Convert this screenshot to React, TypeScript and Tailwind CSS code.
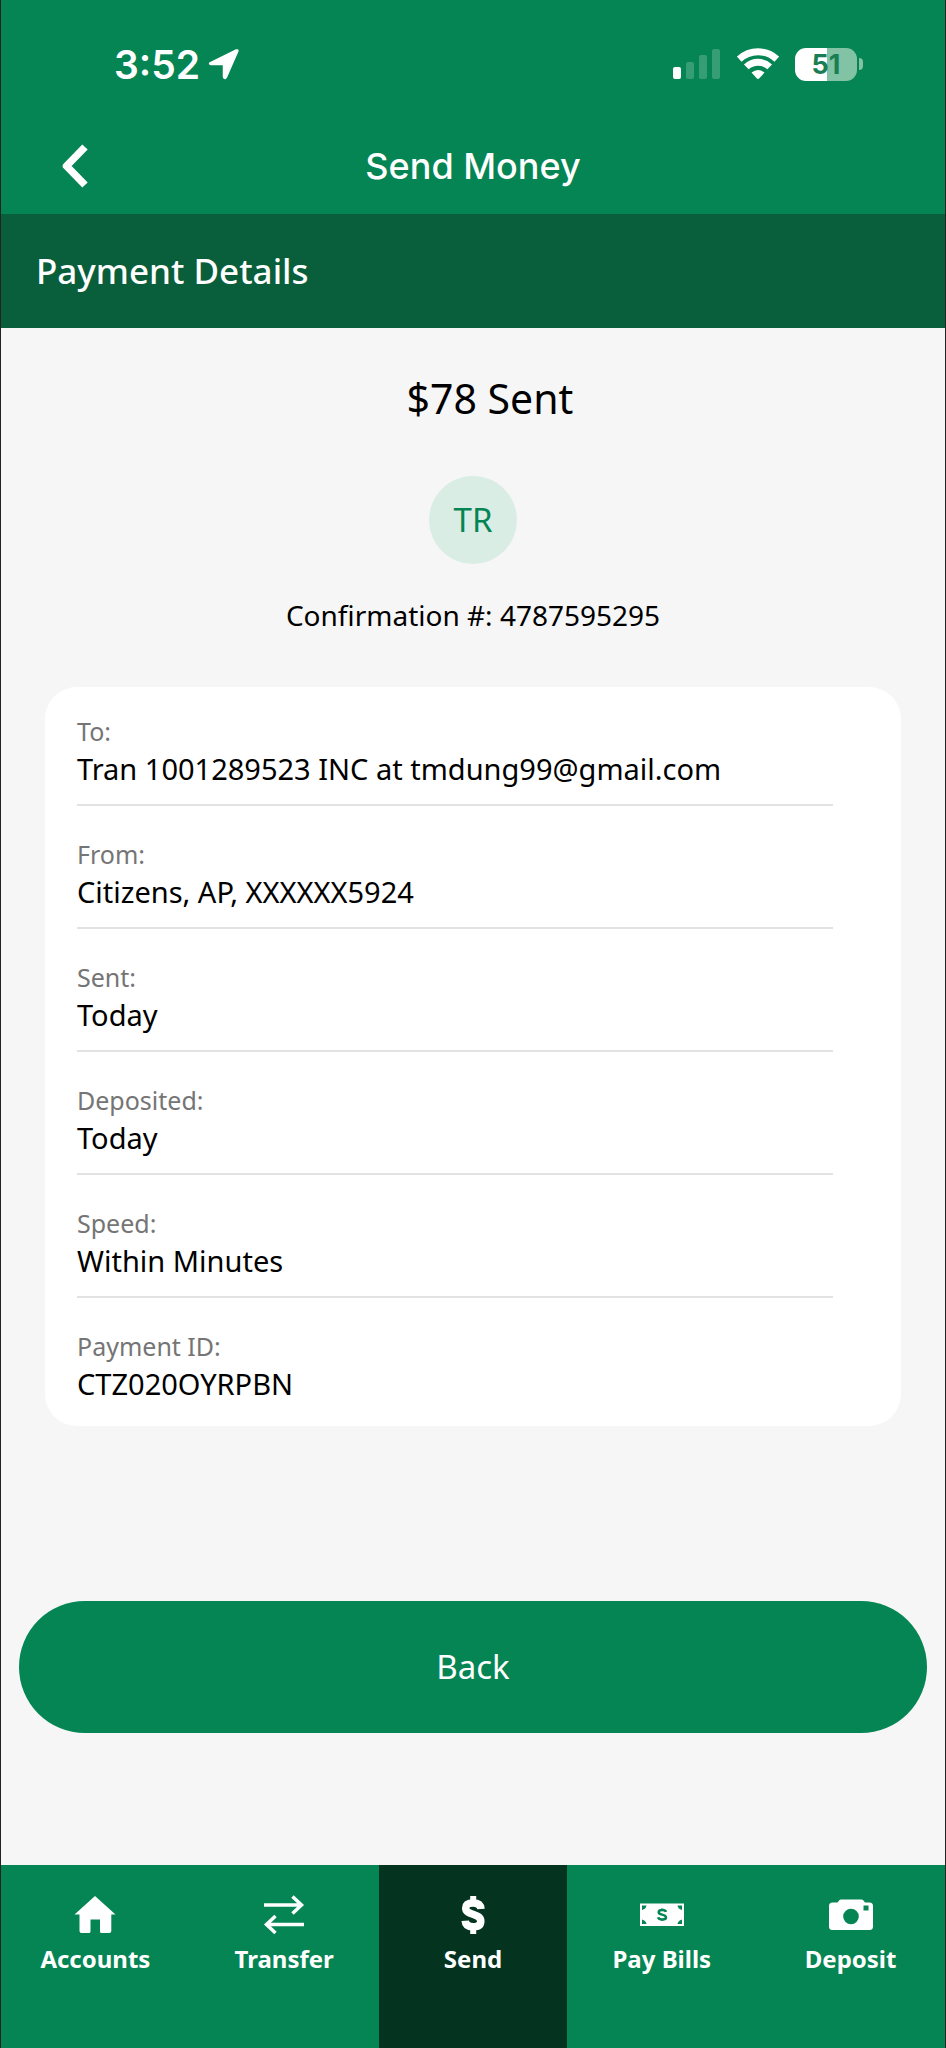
import React from "react";

const details = [
  { label: "To:", value: "Tran 1001289523 INC at tmdung99@gmail.com" },
  { label: "From:", value: "Citizens, AP, XXXXXX5924" },
  { label: "Sent:", value: "Today" },
  { label: "Deposited:", value: "Today" },
  { label: "Speed:", value: "Within Minutes" },
  { label: "Payment ID:", value: "CTZ020OYRPBN" },
];

function LocationArrow() {
  return (
    <svg className="h-8 w-8" viewBox="0 0 32 32" fill="white" aria-hidden="true">
      <path
        d="M2 14.800 28.300 2Q30.300 1.500 29.800 3.300L18.500 29Q17.500 31 16.200 30.200 15.500 29.800 15.500 28.500V17.500Q15.500 16.500 14.500 16.500H3Q1.600 16.400 1.600 15.700 1.600 15.200 2 14.800Z"
        stroke="white"
        strokeWidth="1.500"
        strokeLinejoin="round"
      />
    </svg>
  );
}

function Signal() {
  return (
    <svg className="h-8 w-12" viewBox="0 0 48 32" fill="white" aria-hidden="true">
      <rect x="0" y="19" width="8" height="12" rx="2" />
      <rect x="13" y="14" width="8" height="17" rx="2" opacity="0.2" />
      <rect x="26" y="7" width="8" height="24" rx="2" opacity="0.2" />
      <rect x="39" y="1" width="8" height="30" rx="2" opacity="0.2" />
    </svg>
  );
}

function Wifi() {
  return (
    <svg className="h-8 w-[42px]" viewBox="0 0 42 32" aria-hidden="true">
      <g fill="none" stroke="white" strokeWidth="6.800">
        <path d="M2.200 11.200A27.500 27.500 0 0 1 39.800 11.200" />
        <path d="M9.300 18.900A17 17 0 0 1 32.700 18.900" />
      </g>
      <path d="M14.500 24.600Q21 19.200 27.500 24.600L22.300 30.300Q21 31.600 19.700 30.300Z" fill="white" />
    </svg>
  );
}

function Battery() {
  return (
    <div className="flex items-center gap-[2px]">
      <div className="flex h-[33px] w-[62px] items-center justify-center rounded-[11px] bg-[linear-gradient(90deg,#ffffff_51%,#81c3a4_51%)] text-[27px] leading-none font-bold text-[#1a7d53]">
        51
      </div>
      <div className="h-3 w-1 rounded-r-full bg-[#81c3a4]" />
    </div>
  );
}

function HomeIcon() {
  return (
    <svg className="h-10 w-11" viewBox="0 0 44 40" fill="white" aria-hidden="true">
      <path d="M22 1 42.500 19.500H38.300V36Q38.300 38 36.300 38H28.500Q27 38 27 36.500V24.500H17.500V36.500Q17.500 38 16 38H8.500Q6.500 38 6.500 36V19.500H1.500Z" />
    </svg>
  );
}

function TransferIcon() {
  return (
    <svg className="h-10 w-11" viewBox="0 0 44 40" fill="none" stroke="white" strokeWidth="3.500" aria-hidden="true">
      <path d="M2 10H40M30.500 1.500 39.500 10 30.500 18.500M42 29.500H4M13.500 21 4.500 29.500 13.500 38" />
    </svg>
  );
}

function DollarIcon() {
  return (
    <svg className="h-10 w-11" viewBox="0 0 44 40" fill="none" stroke="white" aria-hidden="true">
      <path d="M30 14Q29.500 8 22.200 8 14.700 8 14.700 13.200C14.700 20.500 29.800 18 29.800 26.300Q29.800 31.800 22.200 31.800 14.500 31.800 14.200 25.800" strokeWidth="7.500" />
      <path d="M22.200 1V8M22.200 32V39" strokeWidth="6" />
    </svg>
  );
}

function BillIcon() {
  return (
    <svg className="h-10 w-11" viewBox="0 0 44 40" aria-hidden="true">
      <path d="M0 8.500H44V31H0Z" fill="white" />
      <path d="M2 10.500H6.500Q6 14 2 15ZM42 10.500H37.500Q38 14 42 15ZM2 29H6.500Q6 25.500 2 24.500ZM42 29H37.500Q38 25.500 42 24.500Z" fill="#048553" />
      <path d="M26 16.800Q25.500 15 22.200 15 18.700 15 18.700 17.200C18.700 20.500 26 18.700 26 22.500Q26 24.500 22.300 24.500 18.700 24.500 18.200 22.300M22.200 13.500V15M22.200 24.500V26" fill="none" stroke="#048553" strokeWidth="2.500" />
    </svg>
  );
}

function CameraIcon() {
  return (
    <svg className="h-10 w-11" viewBox="0 0 44 40" aria-hidden="true">
      <path d="M3.500 7.500H8.500L10.500 5Q11 4.500 12 4.500H32.500Q33.500 4.500 34 5L36 7.500H40.500Q44 7.500 44 11V31.500Q44 35 40.500 35H3.500Q0 35 0 31.500V11Q0 7.500 3.500 7.500Z" fill="white" />
      <circle cx="22" cy="21.500" r="7.800" fill="#048553" />
      <rect x="34.500" y="10.500" width="5" height="5" fill="#048553" />
    </svg>
  );
}

const tabs = [
  { label: "Accounts", Icon: HomeIcon },
  { label: "Transfer", Icon: TransferIcon },
  { label: "Send", Icon: DollarIcon, active: true },
  { label: "Pay Bills", Icon: BillIcon },
  { label: "Deposit", Icon: CameraIcon },
];

export default function App() {
  return (
    <div className="flex min-h-screen flex-col border-x border-[#232323] bg-[#f6f6f6] font-['Noto_Sans',sans-serif] text-black">
      <header className="bg-[#048553] font-['Inter',sans-serif] text-white">
        <div className="flex h-32 items-center justify-between pr-[82px] pl-[113px]">
          <div className="flex items-center gap-2">
            <span className="text-[39px] leading-none font-semibold">3:52</span>
            <LocationArrow />
          </div>
          <div className="flex items-center gap-4">
            <Signal />
            <Wifi />
            <Battery />
          </div>
        </div>
        <div className="grid h-[86px] grid-cols-[1fr_auto_1fr] items-start px-[60px]">
          <button type="button" aria-label="Go back" className="w-7 pt-4">
            <svg className="h-11 w-7" viewBox="0 0 28 44" fill="none" stroke="white" strokeWidth="7.500" aria-hidden="true">
              <path d="M24 3 5.500 22 24 41" strokeLinejoin="round" />
            </svg>
          </button>
          <h1 className="pt-4 text-[36px] leading-[44px] font-medium">Send Money</h1>
        </div>
      </header>
      <h2 className="bg-[#095e3b] px-[35px] pt-[33px] pb-[34px] text-[35px] leading-[47px] font-medium text-white">Payment Details</h2>

      <main className="flex flex-1 flex-col">
        <div className="flex flex-col items-center pt-[42px]">
          <p className="pl-[34px] text-[41px] leading-[56px]">$78 Sent</p>
          <div className="mt-[50px] flex h-[88px] w-[88px] items-center justify-center rounded-full bg-[#d9ede5] text-[33px] text-[#048553]">TR</div>
          <p className="mt-[31px] text-[28px] leading-10">Confirmation #: 4787595295</p>
        </div>
        <dl className="mx-11 mt-[52px] flex flex-col gap-8 rounded-[32px] bg-white pt-7 pr-[68px] pb-5 pl-8">
          {details.map((d) => (
            <div key={d.label} className="border-b-2 border-[#e2e2e2] pb-[13px] last:border-b-0 last:pb-0">
              <dt className="text-[25px] leading-8 text-[#757575]">{d.label}</dt>
              <dd className="text-[29px] leading-[44px]">{d.value}</dd>
            </div>
          ))}
        </dl>
        <div className="mt-auto px-[18px] pb-[132px]">
          <button type="button" className="h-[132px] w-full rounded-full bg-[#048553] text-[33px] text-white">Back</button>
        </div>
      </main>

      <nav className="grid h-[183px] grid-cols-5 bg-[#048553] text-white">
        {tabs.map(({ label, Icon, active }) => (
          <a
            key={label}
            href="#"
            aria-current={active ? "page" : undefined}
            className={`flex flex-col items-center gap-2 pt-[30px] ${active ? "bg-[#04341f]" : ""}`}
          >
            <Icon />
            <span className="text-[24px] leading-8 font-bold">{label}</span>
          </a>
        ))}
      </nav>
    </div>
  );
}
